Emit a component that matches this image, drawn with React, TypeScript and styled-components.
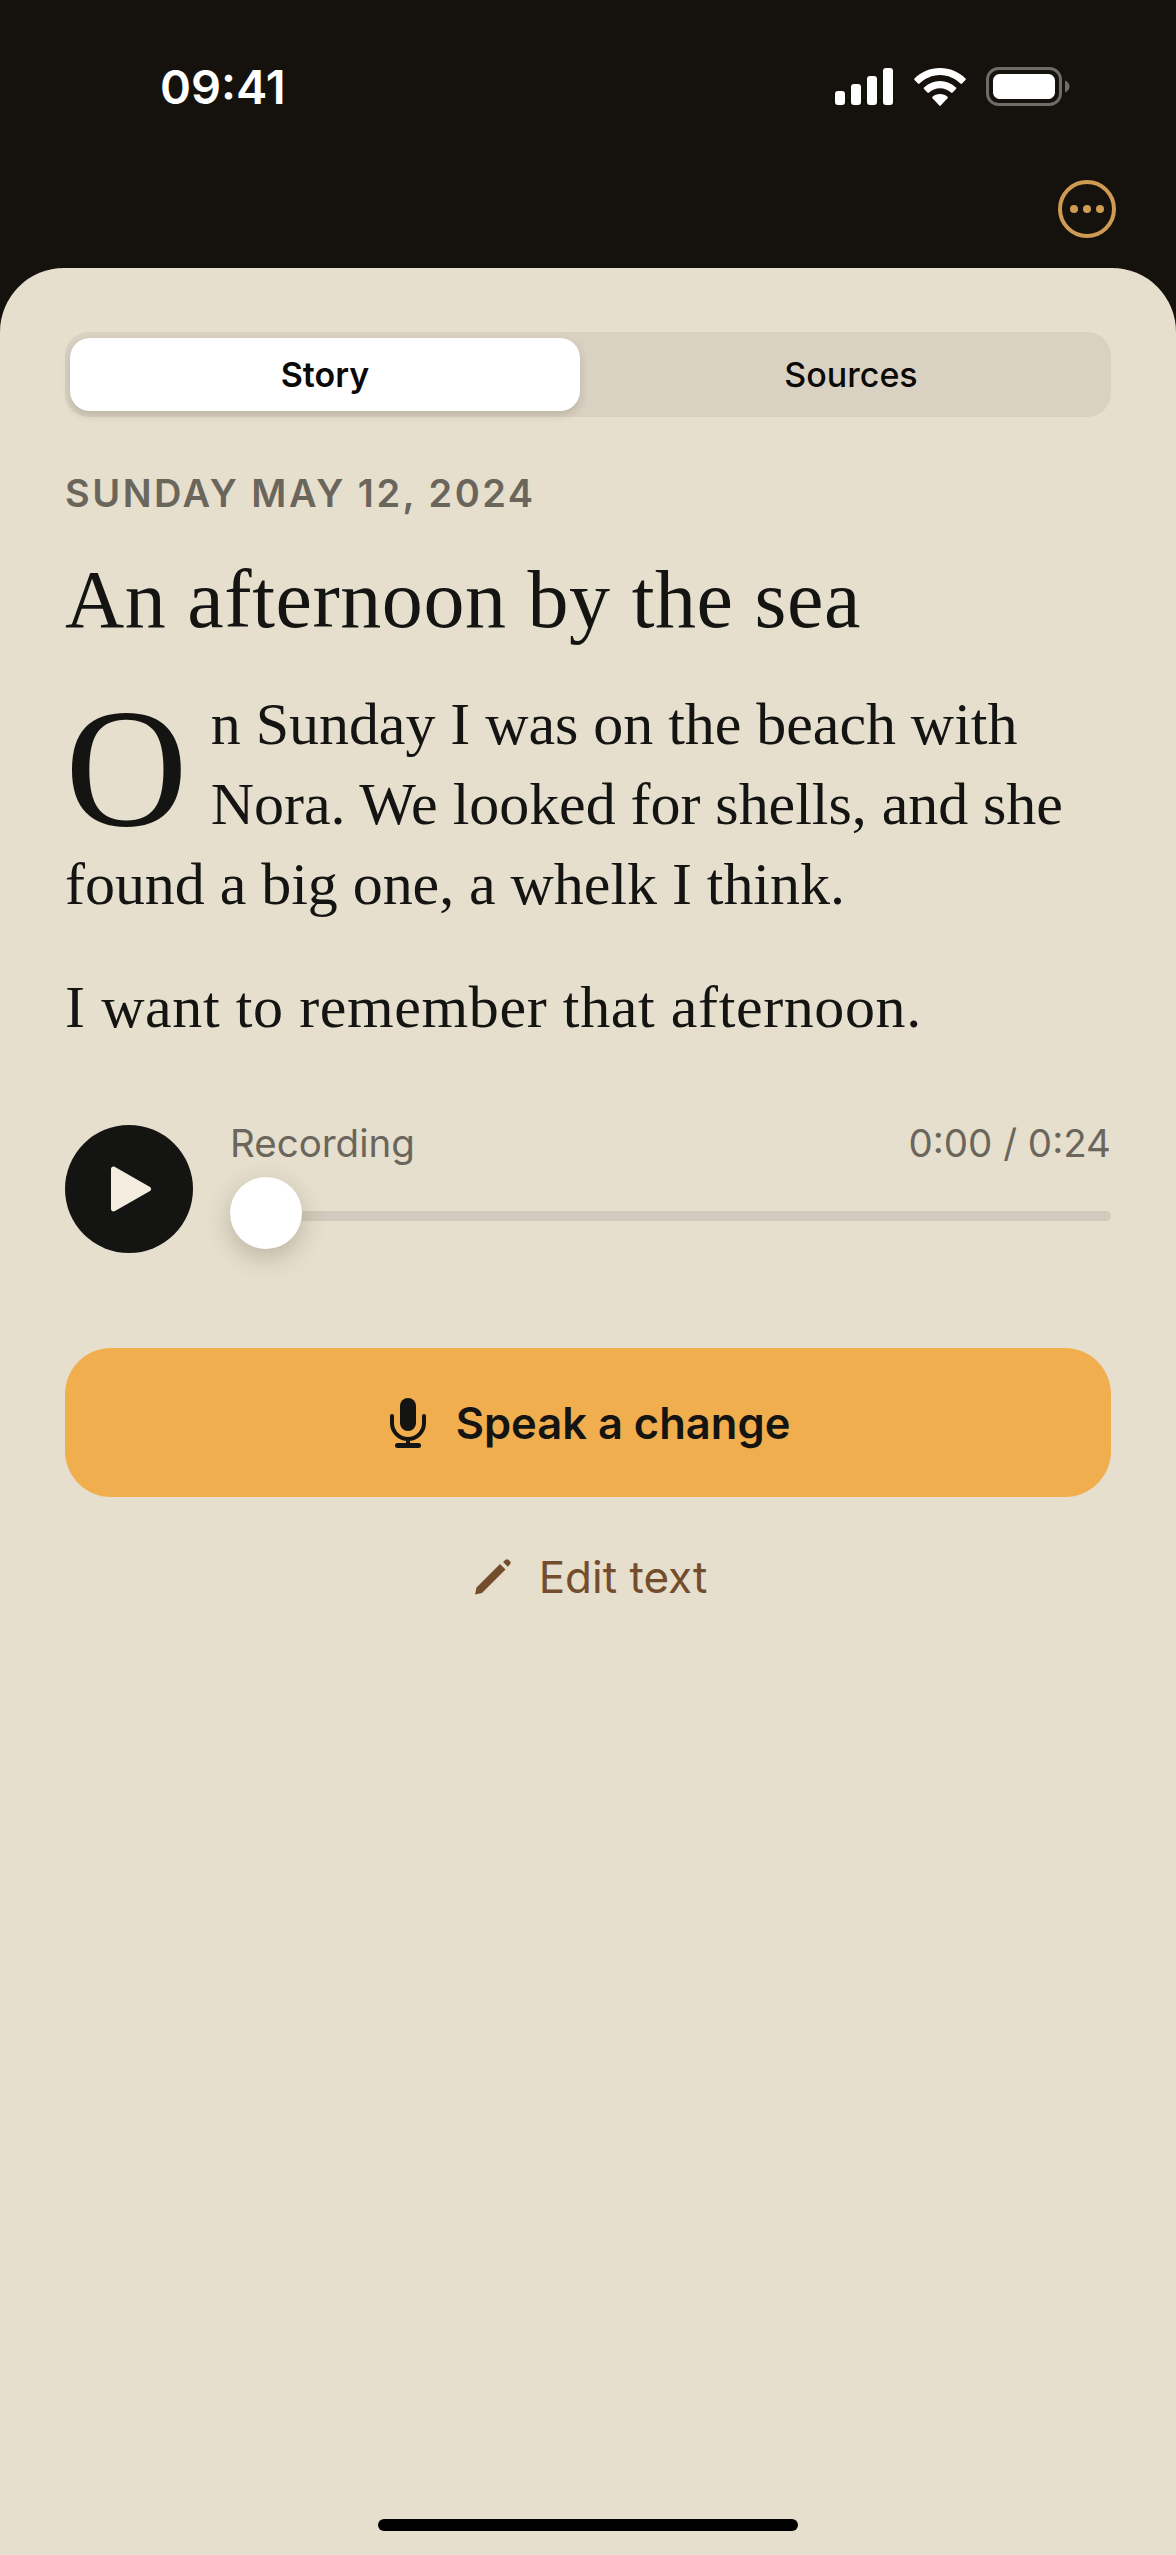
import styled, { createGlobalStyle } from "styled-components";

const GlobalStyle = createGlobalStyle`
  html, body {
    margin: 0;
    padding: 0;
    background: #15120e;
  }
  * {
    box-sizing: border-box;
  }
`;

const Screen = styled.div`
  width: 1176px;
  height: 2555px;
  display: flex;
  flex-direction: column;
  background: #15120e;
  font-family: Inter, "Liberation Sans", sans-serif;
  overflow: hidden;
`;

const StatusBar = styled.div`
  height: 172px;
  padding: 59px 106px 0 160px;
  display: flex;
  justify-content: space-between;
  align-items: flex-start;
`;

const Time = styled.span`
  color: #fff;
  font-size: 47px;
  font-weight: 600;
  line-height: 56px;
`;

const StatusIcons = styled.div`
  display: flex;
  align-items: center;
  gap: 20px;
  padding-top: 8px;
`;

const TopRow = styled.div`
  height: 96px;
  padding: 8px 60px 0 0;
  display: flex;
  justify-content: flex-end;
  align-items: flex-start;
`;

const Sheet = styled.div`
  flex: 1;
  display: flex;
  flex-direction: column;
  padding: 64px 65px 0;
  background: #e6dfce;
  border-radius: 64px 64px 0 0;
`;

const Segments = styled.div`
  height: 85px;
  padding: 6px 5px;
  display: grid;
  grid-template-columns: 510px 1fr;
  background: #d9d1c2;
  border-radius: 24px;
`;

const Segment = styled.div<{ $active?: boolean }>`
  display: flex;
  align-items: center;
  justify-content: center;
  padding-left: ${(p) => (p.$active ? 0 : 16)}px;
  color: #0b0a08;
  font-size: 34px;
  font-weight: ${(p) => (p.$active ? 600 : 500)};
  background: ${(p) => (p.$active ? "#fff" : "transparent")};
  border-radius: 20px;
  box-shadow: ${(p) => (p.$active ? "0 4px 8px rgba(60, 50, 30, 0.18)" : "none")};
`;

const DateLine = styled.div`
  margin-top: 53px;
  color: #6b665c;
  font-size: 38px;
  font-weight: 600;
  letter-spacing: 2.5px;
  line-height: 46px;
`;

const Title = styled.h1`
  margin: 36px 0 0;
  color: #141412;
  font-family: "Liberation Serif", serif;
  font-size: 82px;
  font-weight: 400;
  letter-spacing: 0.55px;
  line-height: 96px;
`;

const Body = styled.p`
  margin: 0;
  color: #141412;
  font-family: "Liberation Serif", serif;
  font-size: 60px;
  line-height: 80px;
`;

const Story = styled(Body)`
  margin-top: 36px;
  letter-spacing: -0.05px;
`;

const Closing = styled(Body)`
  margin-top: 43px;
  letter-spacing: 0.6px;
`;

const DropCap = styled.span`
  float: left;
  margin: 16px 23px 0 0;
  font-size: 170px;
  letter-spacing: 0;
  line-height: 136px;
`;

const Player = styled.div`
  margin-top: 73px;
  display: flex;
  gap: 37px;
`;

const PlayButton = styled.div`
  width: 128px;
  height: 128px;
  margin-top: 5px;
  flex: none;
  display: flex;
  align-items: center;
  justify-content: center;
  padding-left: 4px;
  background: #141412;
  border-radius: 50%;
`;

const PlayerMain = styled.div`
  flex: 1;
`;

const PlayerLabels = styled.div`
  display: flex;
  justify-content: space-between;
  color: #6b665c;
  font-size: 38.500px;
  line-height: 46px;
`;

const Track = styled.div`
  position: relative;
  height: 10px;
  margin-top: 45px;
  background: #d2cabc;
  border-radius: 5px;
`;

const Thumb = styled.div`
  position: absolute;
  left: 0;
  top: -34px;
  width: 72px;
  height: 72px;
  background: #fff;
  border-radius: 50%;
  box-shadow: 0 8px 24px rgba(60, 50, 30, 0.25);
`;

const SpeakButton = styled.div`
  height: 149px;
  margin-top: 95px;
  padding-left: 4px;
  display: flex;
  align-items: center;
  justify-content: center;
  gap: 30px;
  color: #141412;
  font-size: 43.500px;
  font-weight: 600;
  background: #f1ae4e;
  border-radius: 46px;
`;

const EditRow = styled.div`
  margin-top: 52px;
  padding-left: 6px;
  display: flex;
  align-items: center;
  justify-content: center;
  gap: 28px;
  color: #744d2c;
  font-size: 44px;
  line-height: 56px;
`;

const Spacer = styled.div`
  flex: 1;
`;

const HomeIndicator = styled.div`
  width: 420px;
  height: 12px;
  margin: 0 auto 24px;
  background: #000;
  border-radius: 6px;
`;

function SignalIcon() {
  return (
    <svg width="59" height="37" viewBox="0 0 59 37" fill="#fff">
      <rect x="0" y="23" width="10" height="14" rx="3" />
      <rect x="16" y="16" width="10" height="21" rx="3" />
      <rect x="32" y="8" width="10" height="29" rx="3" />
      <rect x="48" y="0" width="10" height="37" rx="3" />
    </svg>
  );
}

function WifiIcon() {
  return (
    <svg width="52" height="38" viewBox="0 0 52 38" fill="#fff">
      <path d="M26 0C16 0 7.500 3.800 0.500 10.500C0 11 0 11.500 0.500 12L4 15.500C4.500 16 5 16 5.500 15.500C11 10.500 18 7 26 7C34 7 41 10.500 46.500 15.500C47 16 47.500 16 48 15.500L51.500 12C52 11.500 52 11 51.500 10.500C44.500 3.800 36 0 26 0Z" />
      <path d="M26 13C20 13 14.500 15.300 10 19.500C9.500 20 9.500 20.500 10 21L13.500 24.500C14 25 14.500 25 15 24.500C18 22 21.800 20.200 26 20.200C30.200 20.200 34 22 37 24.500C37.500 25 38 25 38.500 24.500L42 21C42.500 20.500 42.500 20 42 19.500C37.500 15.300 32 13 26 13Z" />
      <path d="M26 26C23.200 26 20.500 27 18.500 28.800C18 29.300 18 29.800 18.500 30.300L25.300 37.500C25.700 38 26.300 38 26.700 37.500L33.500 30.300C34 29.800 34 29.300 33.500 28.800C31.500 27 28.800 26 26 26Z" />
    </svg>
  );
}

function BatteryIcon() {
  return (
    <svg width="84" height="39" viewBox="0 0 84 39" fill="none">
      <rect x="1.500" y="1.500" width="73" height="36" rx="11" stroke="#6e6c69" strokeWidth="3" />
      <rect x="7" y="7" width="62" height="25" rx="6.500" fill="#fff" />
      <path d="M79 13.500C81.500 14.500 83.500 16.500 83.500 19.500C83.500 22.500 81.500 24.500 79 25.500Z" fill="#6e6c69" />
    </svg>
  );
}

function MoreIcon() {
  return (
    <svg width="58" height="58" viewBox="0 0 58 58" fill="#cf9a52">
      <circle cx="29" cy="29" r="27" fill="none" stroke="#cf9a52" strokeWidth="4" />
      <circle cx="16" cy="29" r="4" />
      <circle cx="29" cy="29" r="4" />
      <circle cx="42" cy="29" r="4" />
    </svg>
  );
}

function PlayIcon() {
  return (
    <svg width="42" height="46" viewBox="0 0 42 46" fill="#f3ecdf">
      <path d="M1 3C1 1 3 0 5 1L40 21C41.500 22 41.500 24 40 25L5 45C3 46 1 45 1 43Z" />
    </svg>
  );
}

function MicIcon() {
  return (
    <svg width="36" height="50" viewBox="0 0 36 50" fill="#141412">
      <rect x="10" y="0" width="16" height="33" rx="8" />
      <path d="M2 18V25C2 33.800 9.200 41 18 41C26.800 41 34 33.800 34 25V18" fill="none" stroke="#141412" strokeWidth="4" strokeLinecap="round" />
      <rect x="16" y="40" width="4" height="8" />
      <rect x="5" y="45" width="26" height="5" rx="2.500" />
    </svg>
  );
}

function PencilIcon() {
  return (
    <svg width="36" height="36" viewBox="0 0 36 36" fill="#744d2c">
      <path d="M0 35.500L1.500 28.500L25 5L30.500 10.500L7 34Z" />
      <path d="M28 3L30.500 0.800C31.500 0 32.500 0 33.500 0.800L35 2.300C36 3.300 36 4.300 35 5.300L32.800 7.800Z" />
    </svg>
  );
}

export default function App() {
  return (
    <>
      <GlobalStyle />
      <Screen>
        <StatusBar>
          <Time>09:41</Time>
          <StatusIcons>
            <SignalIcon />
            <WifiIcon />
            <BatteryIcon />
          </StatusIcons>
        </StatusBar>
        <TopRow>
          <MoreIcon />
        </TopRow>
        <Sheet>
          <Segments>
            <Segment $active>Story</Segment>
            <Segment>Sources</Segment>
          </Segments>
          <DateLine>SUNDAY MAY 12, 2024</DateLine>
          <Title>An afternoon by the sea</Title>
          <Story>
            <DropCap>O</DropCap>n Sunday I was on the beach with Nora. We looked for shells, and she found a big one, a whelk I think.
          </Story>
          <Closing>I want to remember that afternoon.</Closing>
          <Player>
            <PlayButton>
              <PlayIcon />
            </PlayButton>
            <PlayerMain>
              <PlayerLabels>
                <span>Recording</span>
                <span>0:00 / 0:24</span>
              </PlayerLabels>
              <Track>
                <Thumb />
              </Track>
            </PlayerMain>
          </Player>
          <SpeakButton>
            <MicIcon />
            Speak a change
          </SpeakButton>
          <EditRow>
            <PencilIcon />
            Edit text
          </EditRow>
          <Spacer />
          <HomeIndicator />
        </Sheet>
      </Screen>
    </>
  );
}
